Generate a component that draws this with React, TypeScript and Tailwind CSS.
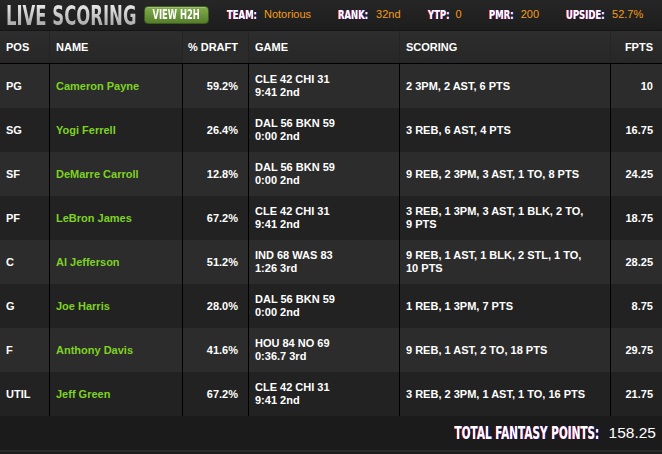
import React from 'react';

type Row = {
  pos: string;
  name: string;
  draft: string;
  game: [string, string];
  scoring: string;
  fpts: string;
};

const rows: Row[] = [
  { pos: 'PG', name: 'Cameron Payne', draft: '59.2%', game: ['CLE 42 CHI 31', '9:41 2nd'], scoring: '2 3PM, 2 AST, 6 PTS', fpts: '10' },
  { pos: 'SG', name: 'Yogi Ferrell', draft: '26.4%', game: ['DAL 56 BKN 59', '0:00 2nd'], scoring: '3 REB, 6 AST, 4 PTS', fpts: '16.75' },
  { pos: 'SF', name: 'DeMarre Carroll', draft: '12.8%', game: ['DAL 56 BKN 59', '0:00 2nd'], scoring: '9 REB, 2 3PM, 3 AST, 1 TO, 8 PTS', fpts: '24.25' },
  { pos: 'PF', name: 'LeBron James', draft: '67.2%', game: ['CLE 42 CHI 31', '9:41 2nd'], scoring: '3 REB, 1 3PM, 3 AST, 1 BLK, 2 TO, 9 PTS', fpts: '18.75' },
  { pos: 'C', name: 'Al Jefferson', draft: '51.2%', game: ['IND 68 WAS 83', '1:26 3rd'], scoring: '9 REB, 1 AST, 1 BLK, 2 STL, 1 TO, 10 PTS', fpts: '28.25' },
  { pos: 'G', name: 'Joe Harris', draft: '28.0%', game: ['DAL 56 BKN 59', '0:00 2nd'], scoring: '1 REB, 1 3PM, 7 PTS', fpts: '8.75' },
  { pos: 'F', name: 'Anthony Davis', draft: '41.6%', game: ['HOU 84 NO 69', '0:36.7 3rd'], scoring: '9 REB, 1 AST, 2 TO, 18 PTS', fpts: '29.75' },
  { pos: 'UTIL', name: 'Jeff Green', draft: '67.2%', game: ['CLE 42 CHI 31', '9:41 2nd'], scoring: '3 REB, 2 3PM, 1 AST, 1 TO, 16 PTS', fpts: '21.75' },
];

const stats = [
  { label: 'TEAM:', w: 'w-[30px]', value: 'Notorious' },
  { label: 'RANK:', w: 'w-[31px]', value: '32nd' },
  { label: 'YTP:', w: 'w-[21px]', value: '0' },
  { label: 'PMR:', w: 'w-[25px]', value: '200' },
  { label: 'UPSIDE:', w: 'w-[39px]', value: '52.7%' },
];

const cols = 'grid grid-cols-[50px_133px_66px_151px_211px_51px]';
const heavy = "font-['DejaVu_Sans','Liberation_Sans',sans-serif] font-bold";

export default function App() {
  return (
    <div className="w-[662px] h-[454px] overflow-hidden bg-[#1c1c1c] text-white font-['Liberation_Sans',Arial,sans-serif]">
      {/* top bar */}
      <div className="h-[31px] flex items-center bg-gradient-to-b from-[#262626] to-[#1d1d1d] border-b border-[#151515]">
        <div className="ml-[6px] w-[131px] h-[22px] flex items-center">
          <span className={`${heavy} inline-block origin-left scale-x-[0.61] whitespace-nowrap text-[27px] leading-none bg-gradient-to-b from-[#f0f0f0] to-[#a0a0a0] bg-clip-text text-transparent`}>
            LIVE SCORING
          </span>
        </div>
        <div className="ml-[7px] w-[65px] h-[18px] rounded-[4px] bg-gradient-to-b from-[#82ad4c] to-[#567f2a] border border-[#3d5a1f] shadow-[inset_0_1px_0_rgba(255,255,255,0.25)] flex items-center justify-center overflow-hidden">
          <span className={`${heavy} inline-block scale-x-[0.62] whitespace-nowrap text-[13.5px] leading-none text-white`}>VIEW H2H</span>
        </div>
        <div className="ml-[18px] flex items-center gap-[27px]">
          {stats.map((s) => (
            <div key={s.label} className="flex items-center gap-[7px]">
              <div className={`${s.w} flex items-center`}>
                <span className={`${heavy} inline-block origin-left scale-x-[0.69] whitespace-nowrap text-[12.3px] leading-none text-white [text-shadow:1px_0_0_#3355ff,-1px_0_0_#ff3333]`}>
                  {s.label}
                </span>
              </div>
              <span className="text-[11px] leading-none text-[#f59d18]">{s.value}</span>
            </div>
          ))}
        </div>
      </div>

      {/* table head */}
      <div className={`${cols} h-[33px] bg-gradient-to-b from-[#2d2d2d] to-[#272727] border-b border-black text-[11px] font-bold`}>
        <div className="flex items-center pl-[6px] border-r border-[#242424]">POS</div>
        <div className="flex items-center pl-[6px] border-r border-[#242424]">NAME</div>
        <div className="flex items-center justify-end pr-[10px] border-r border-[#242424] bg-[#2b2b2b]">% DRAFT</div>
        <div className="flex items-center pl-[6px] border-r border-[#242424]">GAME</div>
        <div className="flex items-center pl-[6px] border-r border-[#242424]">SCORING</div>
        <div className="flex items-center justify-end pr-[9px]">FPTS</div>
      </div>

      {/* rows */}
      {rows.map((r, i) => (
        <div
          key={r.pos}
          className={`${cols} h-[44px] text-[11px] font-bold leading-[13px] ${i % 2 === 0 ? 'bg-[#2c2c2c]' : 'bg-[#222222]'}`}
        >
          <div className="flex items-center pl-[6px] border-r border-black">{r.pos}</div>
          <div className="flex items-center pl-[6px] border-r border-black text-[#7ed321]">{r.name}</div>
          <div className="flex items-center justify-end pr-[10px] border-r border-black">{r.draft}</div>
          <div className="flex flex-col justify-center pl-[6px] border-r border-black">
            <span>{r.game[0]}</span>
            <span>{r.game[1]}</span>
          </div>
          <div className="flex items-center pl-[6px] pr-[22px] border-r border-black">{r.scoring}</div>
          <div className="flex items-center justify-end pr-[9px]">{r.fpts}</div>
        </div>
      ))}

      {/* footer */}
      <div className="h-[36px] bg-[#1b1b1b] border-b-2 border-[#2a2a2a] flex items-center justify-end pr-[6px] gap-[9px]">
        <div className="w-[145px] flex justify-end">
          <span className={`${heavy} inline-block origin-right scale-x-[0.615] whitespace-nowrap text-[17px] leading-none text-white [text-shadow:1px_0_0_#3355ff,-1px_0_0_#ff3333]`}>
            TOTAL FANTASY POINTS:
          </span>
        </div>
        <span className="text-[15.5px] leading-none text-white">158.25</span>
      </div>
    </div>
  );
}
